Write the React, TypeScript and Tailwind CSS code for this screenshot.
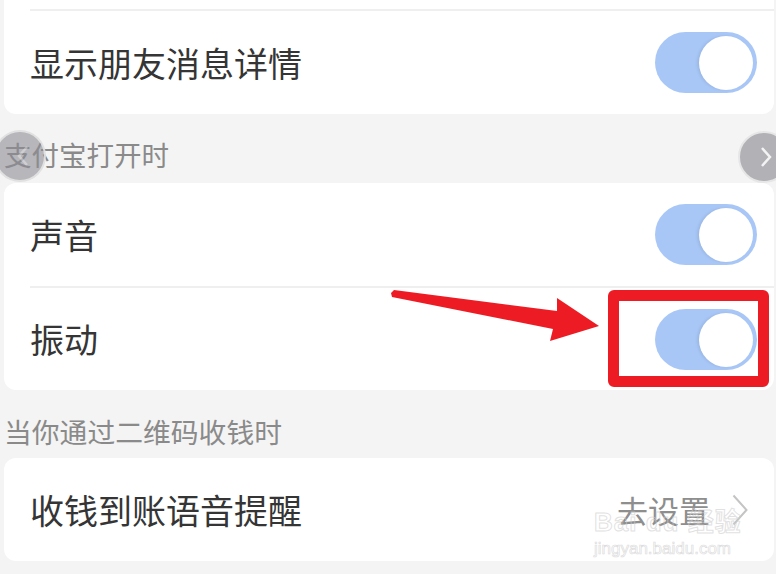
import React from "react";

function Toggle() {
  return (
    <div className="relative w-[102px] h-[61px] rounded-full bg-[#a8c7f7] shrink-0">
      <div className="absolute right-[4px] top-[4px] w-[54px] h-[54px] rounded-full bg-white shadow-[-2px_0_3px_rgba(0,0,0,0.08)]" />
    </div>
  );
}

function Row({ label, right, h }: { label: string; right: React.ReactNode; h: string }) {
  return (
    <div className={`${h} flex items-center justify-between pl-[26px] pr-[17px]`}>
      <span className="text-[34px] leading-[40px] text-[#353535]">{label}</span>
      {right}
    </div>
  );
}

function Divider() {
  return <div className="ml-[26px] h-[2px] bg-[#efefef]" />;
}

export default function App() {
  return (
    <div
      className="relative w-[776px] h-[574px] overflow-hidden bg-[#f4f4f4]"
      style={{ fontFamily: '"Noto Sans CJK SC", "Noto Sans", sans-serif' }}
    >
      {/* Card 1 */}
      <div className="ml-[4px] w-[770px] bg-white rounded-b-[12px]">
        <div className="h-[9px]" />
        <Divider />
        <Row label="显示朋友消息详情" right={<Toggle />} h="h-[103px]" />
      </div>

      <div className="pl-[4px] pt-[26px] pb-[14px] text-[27.5px] leading-[29px] text-[#8a8a8a]">支付宝打开时</div>

      {/* Card 2 */}
      <div className="ml-[4px] w-[770px] bg-white rounded-[12px]">
        <Row label="声音" right={<Toggle />} h="h-[103px]" />
        <Divider />
        <Row label="振动" right={<Toggle />} h="h-[102px]" />
      </div>

      <div className="pl-[4px] pt-[27px] pb-[12px] text-[27.8px] leading-[29px] text-[#8a8a8a]">当你通过二维码收钱时</div>

      {/* Card 3 */}
      <div className="ml-[4px] w-[770px] bg-white rounded-[12px]">
        <div className="h-[103px] flex items-center justify-between pl-[26px] pr-[26px]">
          <span className="text-[34px] leading-[40px] text-[#353535]">收钱到账语音提醒</span>
          <div className="flex items-center gap-[22px]">
            <span className="text-[31px] leading-[36px] text-[#8e8e8e]">去设置</span>
            <svg width="16" height="32" viewBox="0 0 16 32" fill="none">
              <path d="M1.5 1.5 L14.5 16 L1.5 30.5" stroke="#c4c4c4" strokeWidth="2" strokeLinejoin="miter" />
            </svg>
          </div>
        </div>
      </div>

      {/* Baidu watermark */}
      <div className="absolute left-[594px] top-[508px] flex flex-col items-start pointer-events-none">
        <span
          className="text-[26px] leading-[28px] font-bold text-transparent tracking-[1px]"
          style={{ WebkitTextStroke: "1px rgba(205,205,205,0.6)", fontFamily: '"Liberation Sans", "Noto Sans CJK SC", sans-serif' }}
        >
          Bai du 经验
        </span>
        <span
          className="text-[17px] leading-[20px] text-transparent mt-[3px]"
          style={{ WebkitTextStroke: "0.7px rgba(205,205,205,0.7)", fontFamily: '"Liberation Sans", sans-serif' }}
        >
          jingyan.baidu.com
        </span>
      </div>

      {/* Left nav circle */}
      <div className="absolute left-[-6px] top-[130px] w-[52px] h-[52px] rounded-full bg-[rgba(140,140,148,0.6)] border-2 border-[rgba(235,235,235,0.8)] flex items-center justify-center">
        <svg width="12" height="22" viewBox="0 0 12 22" fill="none" className="ml-[6px]">
          <path d="M10 2 L2 11 L10 20" stroke="rgba(255,255,255,0.35)" strokeWidth="2.5" />
        </svg>
      </div>

      {/* Right nav circle */}
      <div className="absolute left-[738px] top-[131px] w-[52px] h-[52px] rounded-full bg-[#b1b1b6] border-2 border-[#e6e6e6] flex items-center pl-[20px]">
        <svg width="12" height="22" viewBox="0 0 12 22" fill="none">
          <path d="M2 2 L10 11 L2 20" stroke="rgba(255,255,255,0.85)" strokeWidth="2.5" />
        </svg>
      </div>

      {/* Red annotation box */}
      <div className="absolute left-[608px] top-[290px] w-[161px] h-[97px] border-[11px] border-[#ed1c24] rounded-[6px]" />

      {/* Red arrow */}
      <svg className="absolute left-0 top-0 pointer-events-none" width="776" height="574" viewBox="0 0 776 574">
        <polygon
          points="394,290 557,311 557,298 599,326 550,341 553,329 392,297 391,293"
          fill="#ed1c24"
        />
      </svg>
    </div>
  );
}
